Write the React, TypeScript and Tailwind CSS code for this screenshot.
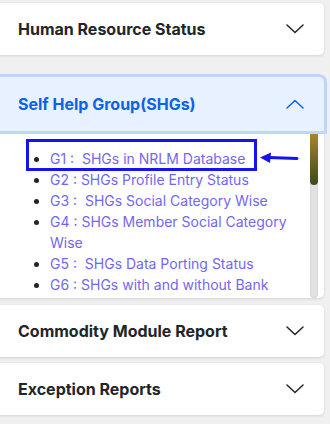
import React from "react";

function Chevron({ up = false, color = "#212529" }: { up?: boolean; color?: string }) {
  return (
    <svg width="18" height="10" viewBox="0 0 18 10" fill="none">
      {up ? (
        <path d="M1 9 L9 1.5 L17 9" stroke={color} strokeWidth="1.5" strokeLinecap="round" strokeLinejoin="round" />
      ) : (
        <path d="M1 1 L9 8.5 L17 1" stroke={color} strokeWidth="1.5" strokeLinecap="round" strokeLinejoin="round" />
      )}
    </svg>
  );
}

function Card({ title }: { title: string }) {
  return (
    <div className="ml-[-6px] w-[330px] h-[52px] bg-white rounded-[5px] shadow-[0_1px_3px_rgba(0,0,0,0.12)] flex items-center justify-between pl-[24px] pr-[20px]">
      <span className="text-[16px] font-bold text-[#212529]">{title}</span>
      <Chevron />
    </div>
  );
}

const items = [
  "G1 :\u00a0 SHGs in NRLM Database",
  "G2 : SHGs Profile Entry Status",
  "G3 :\u00a0 SHGs Social Category Wise",
  "G4 : SHGs Member Social Category Wise",
  "G5 :\u00a0 SHGs Data Porting Status",
  "G6 : SHGs with and without Bank",
];

export default function App() {
  return (
    <div
      className="w-[330px] h-[424px] bg-[#f0f0f0] overflow-hidden pt-[3px] flex flex-col"
      style={{ fontFamily: "Inter, 'Noto Sans', sans-serif" }}
    >
      <Card title="Human Resource Status" />

      <div className="mt-[22px] ml-[-6px] w-[330px] flex flex-col">
        <div className="relative z-10 h-[54px] bg-[#e7f1ff] rounded-t-[5px] shadow-[0_0_0_3px_#c0d6f8] flex items-center justify-between pl-[24px] pr-[20px]">
          <span className="text-[16px] font-bold text-[#0c63e4]">Self Help Group(SHGs)</span>
          <Chevron up color="#0c63e4" />
        </div>
        <div className="relative h-[167px] bg-white flex shadow-[0_1px_3px_rgba(0,0,0,0.12)] rounded-b-[5px]">
          <div className="flex-1 overflow-hidden">
            <ul className="list-disc pl-[56px] pr-[12px] pt-[17px] text-[14px] leading-[21px] text-[#212529]">
              {items.map((t) => (
                <li key={t}>
                  <span className="text-[#7367f0]">{t}</span>
                </li>
              ))}
            </ul>
          </div>
          <div className="w-[8px] mr-[6px] h-[167px] rounded-full bg-[#e2e2e2] shadow-[inset_0_0_2px_rgba(0,0,0,0.15)] flex flex-col">
            <div className="h-[54px] rounded-full bg-[linear-gradient(180deg,#b08a2a_0%,#7a6a28_45%,#3e4a1e_100%)]" />
          </div>
          <div className="absolute left-[32px] top-[8px] w-[231px] h-[32px] border-[3px] border-[#1414f0]" />
          <svg className="absolute left-[265px] top-[19px]" width="40" height="16" viewBox="0 0 40 16">
            <path d="M38 8.5 L10 7.5" stroke="#1414f0" strokeWidth="3" strokeLinecap="round" />
            <path d="M1 7.5 L12 2.5 L11 13 Z" fill="#1414f0" />
          </svg>
        </div>
      </div>

      <div className="mt-[7px] flex flex-col gap-[6px]">
        <Card title="Commodity Module Report" />
        <Card title="Exception Reports" />
      </div>
    </div>
  );
}
